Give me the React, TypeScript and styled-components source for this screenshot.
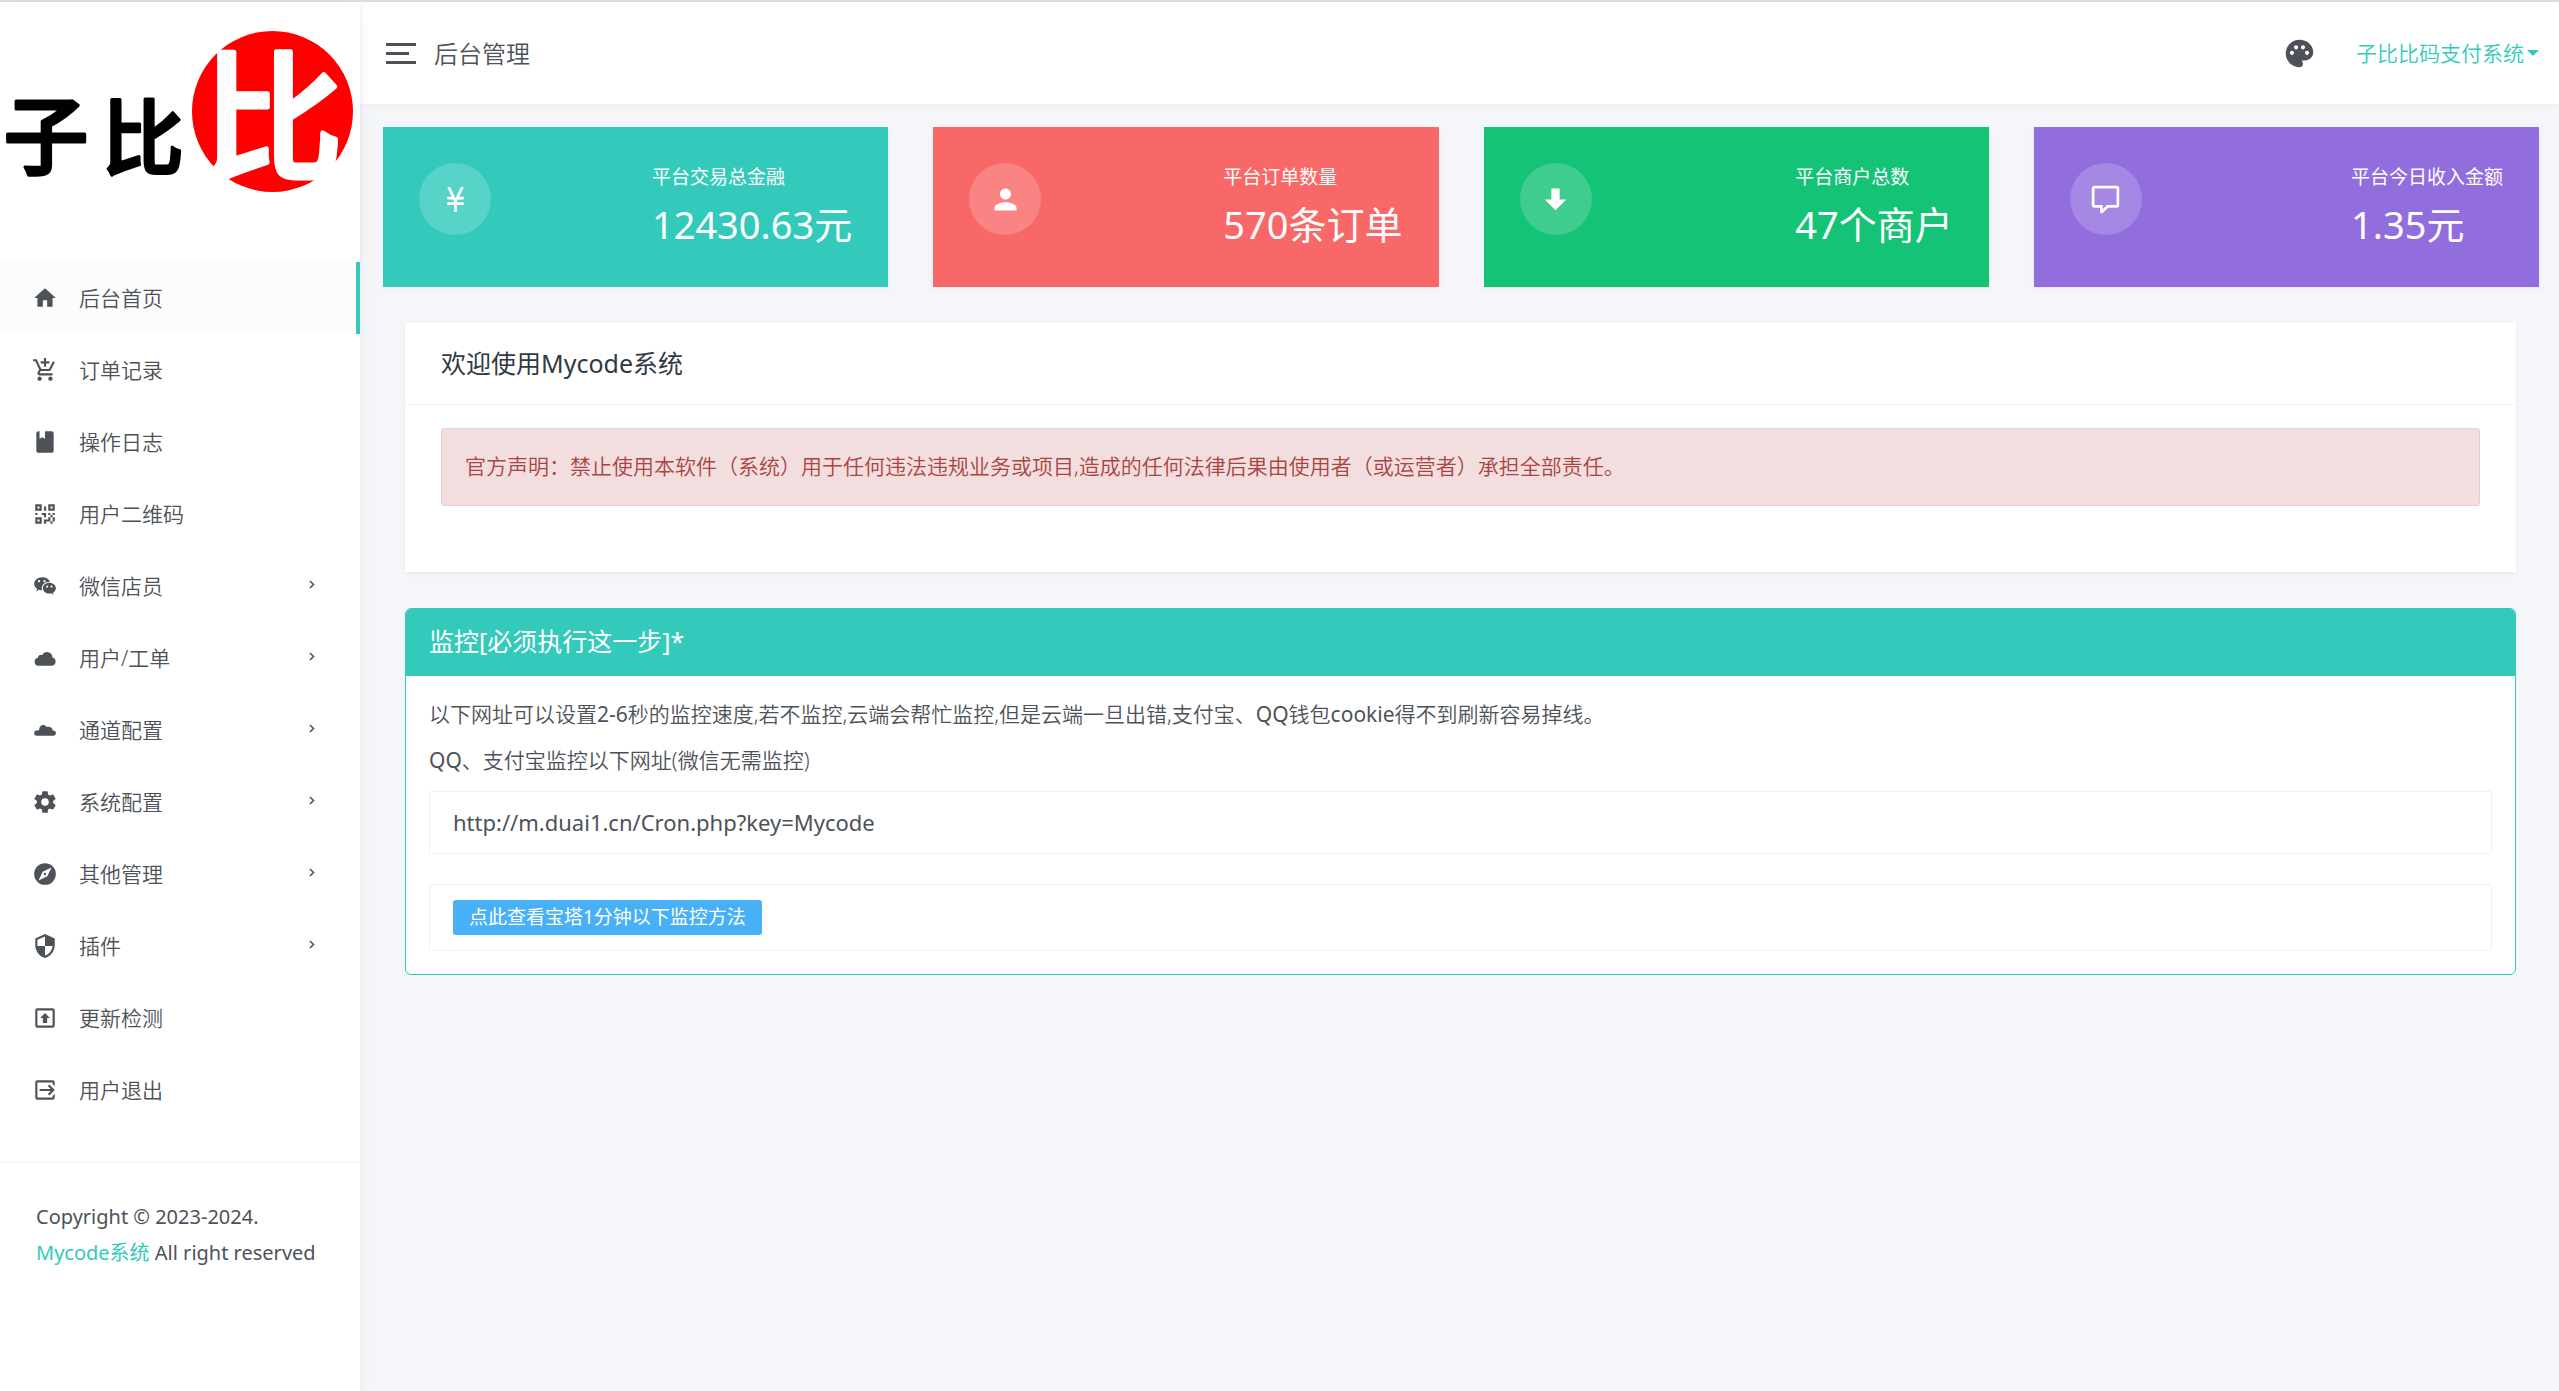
import React from "react";
import styled, { createGlobalStyle } from "styled-components";
import { MdAddShoppingCart, MdHome, MdPalette, MdPerson } from "react-icons/md";

const teal = "#33cabb";
const ink = "#4d5259";
const fonts = '"Noto Sans", "Noto Sans CJK SC", sans-serif';

const GlobalStyle = createGlobalStyle`
  *, *::before, *::after { box-sizing: border-box; }
  body {
    margin: 0;
    background: #f5f6fa;
    color: ${ink};
    font-family: ${fonts};
    font-size: 21px;
    line-height: 31px;
  }
  a { color: inherit; text-decoration: none; }
  ul { list-style: none; margin: 0; padding: 0; }
  h1, h2, p { margin: 0; font-weight: 400; }
  svg { display: block; flex: none; }
`;

const Page = styled.div`
  display: grid;
  grid-template-columns: 360px minmax(0, 1fr);
  min-height: 100vh;
  border-top: 2px solid #e0e0e0;
`;

const Sidebar = styled.aside`
  background: #fff;
  box-shadow: 0 2px 12px rgba(0, 0, 0, 0.06);
  z-index: 2;
`;

const LogoLink = styled.a`
  display: block;
  height: 260px;
  box-shadow: 0 1px 3px rgba(0, 0, 0, 0.06);
`;

const Menu = styled.ul`
  padding-bottom: 36px;
`;

const MenuLink = styled.a<{ $active?: boolean }>`
  display: flex;
  align-items: center;
  gap: 21px;
  height: 72px;
  padding: 0 44px 0 32px;
  font-weight: 350;
  ${({ $active }) =>
    $active &&
    `background: #fcfcfc;
     border-right: 4px solid ${teal};`}
`;

const MenuText = styled.span`
  flex: 1;
`;

const SideFooter = styled.footer`
  padding: 36px;
  border-top: 1px solid #f2f3f5;
  font-size: 20px;
  line-height: 36px;
`;

const TealLink = styled.a`
  color: ${teal};
`;

const Main = styled.div`
  display: flex;
  flex-direction: column;
  min-width: 0;
`;

const Topbar = styled.header`
  display: flex;
  align-items: center;
  height: 102px;
  padding: 0 20px 0 26px;
  background: #fff;
  box-shadow: 0 1px 6px rgba(0, 0, 0, 0.05);
`;

const IconButton = styled.button`
  display: block;
  padding: 0;
  border: 0;
  background: none;
  color: inherit;
  cursor: pointer;
`;

const PageTitle = styled.h1`
  flex: 1;
  margin-left: 18px;
  font-size: 24px;
  font-weight: 350;
`;

const UserMenu = styled.button`
  display: flex;
  align-items: center;
  gap: 3px;
  margin-left: 40px;
  padding: 0;
  border: 0;
  background: none;
  color: ${teal};
  font: inherit;
  font-weight: 350;
  cursor: pointer;
`;

const Content = styled.main`
  padding: 23px 20px 36px 23px;
`;

const Stats = styled.section`
  display: grid;
  grid-template-columns: repeat(4, minmax(0, 1fr));
  gap: 45px;
`;

const StatCard = styled.article<{ $color: string }>`
  display: flex;
  justify-content: space-between;
  height: 160px;
  padding: 36px;
  background: ${({ $color }) => $color};
  color: #fff;
  box-shadow: 0 2px 5px rgba(0, 0, 0, 0.05);
`;

const StatIcon = styled.span`
  display: flex;
  align-items: center;
  justify-content: center;
  width: 72px;
  height: 72px;
  border-radius: 50%;
  background: rgba(255, 255, 255, 0.18);
`;

const StatLabel = styled.p`
  font-size: 19px;
  line-height: 28px;
`;

const StatValue = styled.p`
  font-size: 38px;
  line-height: 66px;
`;

const Panels = styled.div`
  display: grid;
  gap: 36px;
  padding: 36px 23px 0 22px;
`;

const Card = styled.section`
  background: #fff;
  box-shadow: 0 2px 5px rgba(0, 0, 0, 0.05);
`;

const CardHeader = styled.header`
  padding: 25px 36px;
  border-bottom: 1px solid #f2f3f5;
`;

const CardTitle = styled.h2`
  color: #313944;
  font-size: 25px;
  line-height: 31px;
`;

const CardBody = styled.div`
  padding: 23px 36px 66px;
`;

const Alert = styled.div`
  padding: 22px 23px 23px;
  border: 1px solid #ebccd1;
  border-radius: 3px;
  background: #f2dede;
  color: #a94442;
  font-weight: 350;
`;

const Panel = styled.section`
  border: 1px solid ${teal};
  border-radius: 6px;
  overflow: hidden;
  background: #fff;
`;

const PanelTitle = styled.h2`
  padding: 17px 23px 19px;
  background: ${teal};
  color: #fff;
  font-size: 25px;
`;

const PanelBody = styled.div`
  display: grid;
  gap: 15px;
  padding: 23px;
`;

const Note = styled.p`
  font-weight: 350;
`;

/* Latin words keep the regular weight inside the lighter Chinese text. */
const Latin = styled.span`
  font-weight: 400;
`;

const ListGroup = styled.ul`
  display: grid;
  gap: 30px;
`;

const ListItem = styled.li`
  display: flex;
  padding: 15px 23px;
  border: 1px solid #f0f0f0;
  border-radius: 2px;
  font-size: 22px;
`;

const InfoButton = styled.a`
  padding: 0 16px;
  border-radius: 3px;
  background: #48b0f7;
  color: #fff;
  font-size: 19px;
  line-height: 35px;
`;

const Glyph = ({ d, size = 26 }: { d: string; size?: number }) => (
  <svg width={size} height={size} viewBox="0 0 24 24" fill="currentColor" fillRule="evenodd" aria-hidden="true">
    <path d={d} />
  </svg>
);

const paths = {
  book: "M18 22a2 2 0 0 0 2-2V4a2 2 0 0 0-2-2h-6v7L9.500 7.500 7 9V2H6a2 2 0 0 0-2 2v16a2 2 0 0 0 2 2h12z",
  qrcode:
    "M3,11H5V13H3V11M11,5H13V9H11V5M9,11H13V15H11V13H9V11M15,11H17V13H19V11H21V13H19V15H21V19H19V21H17V19H13V21H11V17H15V15H17V13H15V11M19,19V15H17V19H19M15,3H21V9H15V3M17,5V7H19V5H17M3,3H9V9H3V3M5,5V7H7V5H5M3,15H9V21H3V15M5,17V19H7V17H5Z",
  wechat:
    "M9.5,4C5.36,4 2,6.69 2,10C2,11.89 3.08,13.56 4.78,14.66L4,17L6.5,15.5C7.39,15.81 8.37,16 9.41,16C9.15,15.37 9,14.7 9,14C9,10.69 12.13,8 16,8C16.19,8 16.38,8 16.56,8.03C15.54,5.69 12.78,4 9.5,4M6.5,6.5A1,1 0 0,1 7.5,7.5A1,1 0 0,1 6.5,8.5A1,1 0 0,1 5.5,7.5A1,1 0 0,1 6.5,6.5M11.5,6.5A1,1 0 0,1 12.5,7.5A1,1 0 0,1 11.5,8.5A1,1 0 0,1 10.5,7.5A1,1 0 0,1 11.5,6.5M16,9C12.69,9 10,11.24 10,14C10,16.76 12.69,19 16,19C16.67,19 17.31,18.92 17.91,18.75L20,20L19.38,18.13C20.95,17.22 22,15.71 22,14C22,11.24 19.31,9 16,9M14,11.5A1,1 0 0,1 15,12.5A1,1 0 0,1 14,13.5A1,1 0 0,1 13,12.5A1,1 0 0,1 14,11.5M18,11.5A1,1 0 0,1 19,12.5A1,1 0 0,1 18,13.5A1,1 0 0,1 17,12.5A1,1 0 0,1 18,11.5Z",
  cloud:
    "M5.700 19.100A3.700 3.700 0 0 1 5.400 11.800A3 3 0 0 1 9.400 9.200A5 5 0 0 1 18.800 11.600A3.800 3.800 0 0 1 18.300 19.100Z",
  flatCloud:
    "M4.400 17.200A2.400 2.400 0 0 1 4.400 12.400Q5.500 11.900 6.700 12C6.400 9.600 8.200 7.400 10.200 7.400C11.800 7.400 12.700 8 13.600 9.300C16 8.300 19 9.400 19 12.400H19.600A2.400 2.400 0 0 1 19.600 17.200Z",
  settings:
    "M12,15.5A3.5,3.5 0 0,1 8.5,12A3.5,3.5 0 0,1 12,8.5A3.5,3.5 0 0,1 15.5,12A3.5,3.5 0 0,1 12,15.5M19.43,12.97C19.47,12.65 19.5,12.33 19.5,12C19.5,11.67 19.47,11.34 19.43,11L21.54,9.37C21.73,9.22 21.78,8.95 21.66,8.73L19.66,5.27C19.54,5.05 19.27,4.96 19.05,5.05L16.56,6.05C16.04,5.66 15.5,5.32 14.87,5.07L14.5,2.42C14.46,2.18 14.25,2 14,2H10C9.75,2 9.54,2.18 9.5,2.42L9.13,5.07C8.5,5.32 7.96,5.66 7.44,6.05L4.95,5.05C4.73,4.96 4.46,5.05 4.34,5.27L2.34,8.73C2.21,8.95 2.27,9.22 2.46,9.37L4.57,11C4.53,11.34 4.5,11.67 4.5,12C4.5,12.33 4.53,12.65 4.57,12.97L2.46,14.63C2.27,14.78 2.21,15.05 2.34,15.27L4.34,18.73C4.46,18.95 4.73,19.03 4.95,18.95L7.44,17.94C7.96,18.34 8.5,18.68 9.13,18.93L9.5,21.58C9.54,21.82 9.75,22 10,22H14C14.25,22 14.46,21.82 14.5,21.58L14.87,18.93C15.5,18.67 16.04,18.34 16.56,17.94L19.05,18.95C19.27,19.03 19.54,18.95 19.66,18.73L21.66,15.27C21.78,15.05 21.73,14.78 21.54,14.63L19.43,12.97Z",
  compass:
    "M14.19,14.19L6,18L9.81,9.81L18,6M12,2A10,10 0 0,0 2,12A10,10 0 0,0 12,22A10,10 0 0,0 22,12A10,10 0 0,0 12,2M12,10.9A1.1,1.1 0 0,0 10.9,12A1.1,1.1 0 0,0 12,13.1A1.1,1.1 0 0,0 13.1,12A1.1,1.1 0 0,0 12,10.9Z",
  shield:
    "M12,12H19C18.47,16.11 15.72,19.78 12,20.92V12H5V6.3L12,3.19M12,1L3,5V11C3,16.55 6.84,21.73 12,23C17.16,21.73 21,16.55 21,11V5L12,1Z",
  update:
    "M5 3H19A2 2 0 0 1 21 5V19A2 2 0 0 1 19 21H5A2 2 0 0 1 3 19V5A2 2 0 0 1 5 3M5 5V19H19V5H5M12 7.300L16.500 12H14V16.500H10V12H7.500Z",
  exit: "M19 3A2 2 0 0 1 21 5V8.500L19 6.500V5H5V19H19V17.500L21 15.500V19A2 2 0 0 1 19 21H5A2 2 0 0 1 3 19V5A2 2 0 0 1 5 3ZM14.600 8.400L16 7L21 12L16 17L14.600 15.600L17.200 13H7V11H17.200Z",
  yen: "M11,21V16H6V14H11V13.67L10.22,12H6V10H9.29L6,3H8.2L12,11.18L15.8,3H18L14.71,10H18V12H13.78L13,13.67V14H18V16H13V21H11Z",
  arrowDown: "M9,4H15V12H19.84L12,19.84L4.16,12H9V4Z",
  comment:
    "M9,22A1,1 0 0,1 8,21V18H4A2,2 0 0,1 2,16V4C2,2.89 2.9,2 4,2H20A2,2 0 0,1 22,4V16A2,2 0 0,1 20,18H13.9L10.2,21.71C10,21.9 9.75,22 9.5,22V22H9M10,16V19.08L13.08,16H20V4H4V16H10Z",
};

const Chevron = () => (
  <svg width="8" height="14" viewBox="0 0 8 14" fill="none" stroke="currentColor" strokeWidth="1.500" aria-hidden="true">
    <path d="M2 2L5.500 5.500L2 9" />
  </svg>
);

const Logo = () => (
  <svg width="360" height="260" viewBox="0 0 360 260" role="img" aria-label="子比">
    <circle cx="272.500" cy="109.500" r="80.500" fill="#f00" />
    <g fontFamily='"Noto Sans CJK SC", sans-serif' fontWeight="500" strokeLinejoin="round" textAnchor="middle">
      <text x="46" y="166" fontSize="85" fill="#000" stroke="#000" strokeWidth="3">子</text>
      <text x="143" y="166" fontSize="82" fill="#000" stroke="#000" strokeWidth="3">比</text>
      <text x="273" y="167" fontSize="140" fill="#fff" stroke="#fff" strokeWidth="5">比</text>
    </g>
  </svg>
);

type MenuEntry = { label: string; icon: React.ReactNode; active?: boolean; nested?: boolean };

const menu: MenuEntry[] = [
  { label: "后台首页", icon: <MdHome size={26} />, active: true },
  { label: "订单记录", icon: <MdAddShoppingCart size={26} /> },
  { label: "操作日志", icon: <Glyph d={paths.book} /> },
  { label: "用户二维码", icon: <Glyph d={paths.qrcode} /> },
  { label: "微信店员", icon: <Glyph d={paths.wechat} />, nested: true },
  { label: "用户/工单", icon: <Glyph d={paths.cloud} />, nested: true },
  { label: "通道配置", icon: <Glyph d={paths.flatCloud} />, nested: true },
  { label: "系统配置", icon: <Glyph d={paths.settings} />, nested: true },
  { label: "其他管理", icon: <Glyph d={paths.compass} />, nested: true },
  { label: "插件", icon: <Glyph d={paths.shield} />, nested: true },
  { label: "更新检测", icon: <Glyph d={paths.update} /> },
  { label: "用户退出", icon: <Glyph d={paths.exit} /> },
];

const stats = [
  { label: "平台交易总金融", value: "12430.63元", color: "#33cabb", icon: <Glyph d={paths.yen} size={33} /> },
  { label: "平台订单数量", value: "570条订单", color: "#f96868", icon: <MdPerson size={33} /> },
  { label: "平台商户总数", value: "47个商户", color: "#15c377", icon: <Glyph d={paths.arrowDown} size={33} /> },
  { label: "平台今日收入金额", value: "1.35元", color: "#926dde", icon: <Glyph d={paths.comment} size={33} /> },
];

export default function App() {
  return (
    <>
      <GlobalStyle />
      <Page>
        <Sidebar>
          <LogoLink href="#home">
            <Logo />
          </LogoLink>
          <nav>
            <Menu>
              {menu.map((item) => (
                <li key={item.label}>
                  <MenuLink href="#" $active={item.active}>
                    {item.icon}
                    <MenuText>{item.label}</MenuText>
                    {item.nested && <Chevron />}
                  </MenuLink>
                </li>
              ))}
            </Menu>
          </nav>
          <SideFooter>
            <p>Copyright © 2023-2024.</p>
            <p>
              <TealLink href="#">Mycode系统</TealLink> All right reserved
            </p>
          </SideFooter>
        </Sidebar>

        <Main>
          <Topbar>
            <IconButton type="button" aria-label="菜单">
              <svg width="30" height="21" viewBox="0 0 30 21" fill="currentColor">
                <path d="M0 0H30V3H0ZM0 9H23V12H0ZM0 18H30V21H0Z" />
              </svg>
            </IconButton>
            <PageTitle>后台管理</PageTitle>
            <IconButton type="button" aria-label="主题">
              <MdPalette size={33} />
            </IconButton>
            <UserMenu type="button">
              子比比码支付系统
              <svg width="12" height="6" viewBox="0 0 12 6" fill="currentColor" aria-hidden="true">
                <path d="M0 0H12L6 6Z" />
              </svg>
            </UserMenu>
          </Topbar>

          <Content>
            <Stats>
              {stats.map((stat) => (
                <StatCard key={stat.label} $color={stat.color}>
                  <StatIcon>{stat.icon}</StatIcon>
                  <div>
                    <StatLabel>{stat.label}</StatLabel>
                    <StatValue>{stat.value}</StatValue>
                  </div>
                </StatCard>
              ))}
            </Stats>

            <Panels>
              <Card>
                <CardHeader>
                  <CardTitle>欢迎使用Mycode系统</CardTitle>
                </CardHeader>
                <CardBody>
                  <Alert role="alert">
                    官方声明：禁止使用本软件（系统）用于任何违法违规业务或项目,造成的任何法律后果由使用者（或运营者）承担全部责任。
                  </Alert>
                </CardBody>
              </Card>

              <Panel>
                <PanelTitle>监控[必须执行这一步]*</PanelTitle>
                <PanelBody>
                  <Note>
                    以下网址可以设置<Latin>2-6</Latin>秒的监控速度,若不监控,云端会帮忙监控,但是云端一旦出错,支付宝、<Latin>QQ</Latin>
                    钱包<Latin>cookie</Latin>得不到刷新容易掉线。
                  </Note>
                  <Note>
                    <Latin>QQ</Latin>、支付宝监控以下网址(微信无需监控)
                  </Note>
                  <ListGroup>
                    <ListItem>http://m.duai1.cn/Cron.php?key=Mycode</ListItem>
                    <ListItem>
                      <InfoButton href="#">点此查看宝塔1分钟以下监控方法</InfoButton>
                    </ListItem>
                  </ListGroup>
                </PanelBody>
              </Panel>
            </Panels>
          </Content>
        </Main>
      </Page>
    </>
  );
}
